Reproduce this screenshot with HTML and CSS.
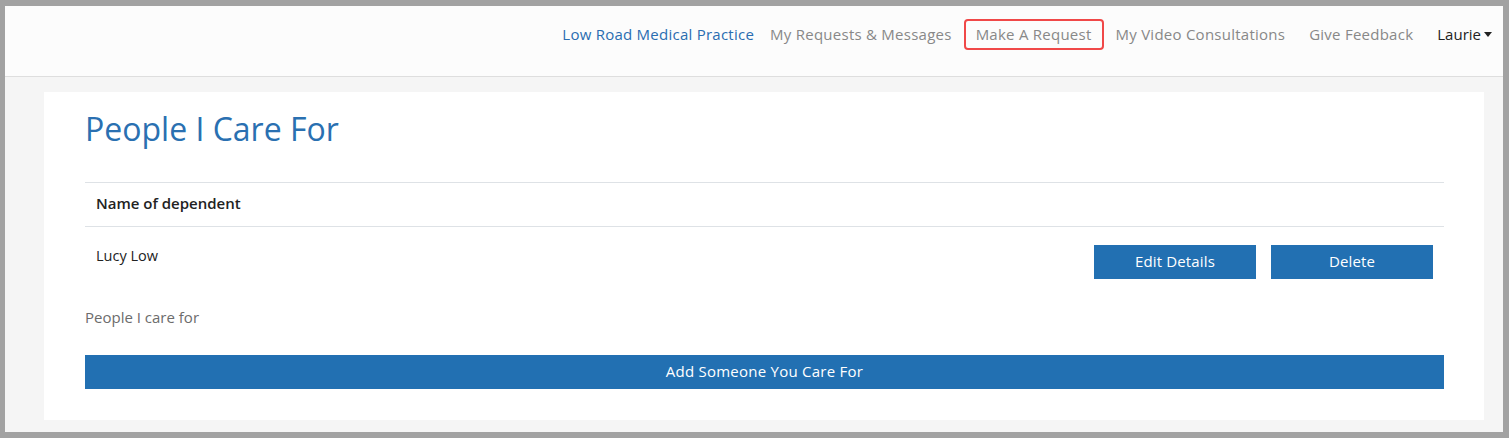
FILE: index.html
```html
<!DOCTYPE html>
<html lang="en">
<head>
<meta charset="utf-8">
<title>People I Care For</title>
<link rel="stylesheet" href="styles.css">
</head>
<body>
<div class="window">
  <header class="topbar">
    <nav class="nav">
      <a class="nav-link practice" href="#">Low Road Medical Practice</a>
      <a class="nav-link" href="#">My Requests &amp; Messages</a>
      <a class="nav-link highlighted" href="#">Make A Request</a>
      <a class="nav-link" href="#">My Video Consultations</a>
      <a class="nav-link" href="#">Give Feedback</a>
      <a class="nav-link user" href="#">Laurie<span class="caret"></span></a>
    </nav>
  </header>
  <main class="main">
    <section class="card">
      <h1 class="title">People I Care For</h1>
      <div class="table">
        <div class="thead">Name of dependent</div>
        <div class="row">
          <div class="name">Lucy Low</div>
          <div class="actions">
            <button class="btn">Edit Details</button>
            <button class="btn">Delete</button>
          </div>
        </div>
      </div>
      <p class="note">People I care for</p>
      <button class="btn btn-block">Add Someone You Care For</button>
    </section>
  </main>
</div>
</body>
</html>
```
FILE: styles.css
```css
* { box-sizing: border-box; }
html, body { margin: 0; padding: 0; }
body {
  background: #a2a2a2;
  font-family: "Open Sans", "Noto Sans", sans-serif;
  height: 438px;
  overflow: hidden;
}
.window {
  margin: 6px 6px 0 5px;
  height: 426px;
  background: #f5f5f5;
  overflow: hidden;
  display: flex;
  flex-direction: column;
}
.topbar {
  height: 71px;
  background: #fcfcfc;
  border-bottom: 1px solid #dedede;
  display: flex;
  justify-content: flex-end;
  align-items: flex-start;
  padding: 13px 9px 0 0;
  flex-shrink: 0;
}
.nav {
  display: flex;
  align-items: center;
}
.nav-link {
  font-size: 15px;
  letter-spacing: 0.25px;
  color: #888;
  text-decoration: none;
  padding: 4px 10px 5px;
  line-height: 18px;
  border: 2px solid transparent;
  border-radius: 4px;
}
.nav-link.practice { color: #2a6db1; padding-right: 2px; }
.nav-link.highlighted { border-color: #f04848; }
.nav-link.user { color: #222; padding-right: 0; letter-spacing: 0; }
.caret {
  display: inline-block;
  width: 0; height: 0;
  border-left: 4px solid transparent;
  border-right: 4px solid transparent;
  border-top: 5px solid #222;
  margin-left: 3px;
  vertical-align: 3px;
}
.main {
  flex: 1;
  padding: 15px 19px 0 39px;
}
.card {
  background: #fff;
  padding: 18px 40px 31px 41px;
}
.title {
  margin: 0 0 34px;
  font-weight: 400;
  font-size: 32px;
  line-height: 38px;
  color: #2a70b1;
}
.table {
  border-top: 1px solid #dee2e6;
}
.thead {
  height: 44px;
  border-bottom: 1px solid #dee2e6;
  padding: 0 11px 3px;
  display: flex;
  align-items: center;
  font-weight: 600;
  font-size: 15px;
  color: #222;
}
.row {
  display: flex;
  justify-content: space-between;
  align-items: flex-start;
  padding: 18px 11px 0;
}
.name {
  font-size: 14.5px;
  color: #222;
  line-height: 21px;
}
.actions {
  display: flex;
  gap: 15px;
}
.btn {
  font-family: inherit;
  background: #2270b2;
  color: #fff;
  border: 0;
  border-radius: 0;
  width: 162px;
  height: 34px;
  font-size: 15px;
  letter-spacing: 0.15px;
  font-weight: 500;
  padding: 0 0 3px;
}
.note {
  margin: 27px 0 27px;
  font-size: 15px;
  color: #6c6c6c;
  line-height: 22px;
}
.btn-block {
  display: block;
  width: 100%;
  letter-spacing: 0.25px;
}
```
